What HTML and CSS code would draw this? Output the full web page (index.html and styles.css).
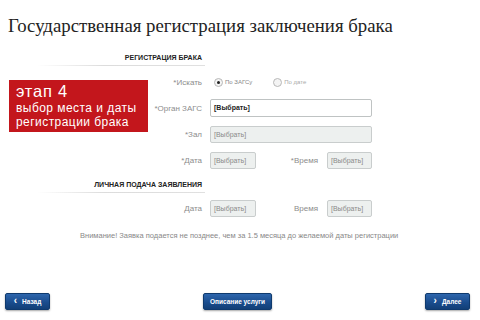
FILE: index.html
```html
<!DOCTYPE html>
<html lang="ru">
<head>
<meta charset="utf-8">
<link rel="stylesheet" href="styles.css">
</head>
<body>
<div class="page">
  <h1 class="title">Государственная регистрация заключения брака</h1>

  <div class="sec-head"><span>РЕГИСТРАЦИЯ БРАКА</span></div>

  <div class="form">
    <div class="stage">
      <div class="stage-num">этап 4</div>
      <div class="stage-text">выбор места и даты</div>
      <div class="stage-text">регистрации брака</div>
    </div>

    <div class="label">*Искать</div>
    <div class="field radios">
      <span class="radio checked"></span><span class="radio-label">По ЗАГСу</span>
      <span class="radio"></span><span class="radio-label light">По дате</span>
    </div>

    <div class="label">*Орган ЗАГС</div>
    <div class="field"><div class="input white">[Выбрать]</div></div>

    <div class="label">*Зал</div>
    <div class="field"><div class="input gray">[Выбрать]</div></div>

    <div class="label">*Дата</div>
    <div class="field pair">
      <div class="input gray small">[Выбрать]</div>
      <div class="label inner">*Время</div>
      <div class="input gray small">[Выбрать]</div>
    </div>
  </div>

  <div class="sec-head two"><span>ЛИЧНАЯ ПОДАЧА ЗАЯВЛЕНИЯ</span></div>

  <div class="form second">
    <div class="label">Дата</div>
    <div class="field pair">
      <div class="input gray small">[Выбрать]</div>
      <div class="label inner">Время</div>
      <div class="input gray small">[Выбрать]</div>
    </div>
  </div>

  <p class="notice">Внимание! Заявка подается не позднее, чем за 1.5 месяца до желаемой даты регистрации</p>

  <div class="footer">
    <button class="btn"><span class="chev">&#8249;</span>Назад</button>
    <button class="btn wide">Описание услуги</button>
    <button class="btn"><span class="chev">&#8250;</span>Далее</button>
  </div>
</div>
</body>
</html>
```
FILE: styles.css
```css
html, body {
  margin: 0;
  padding: 0;
  background: #fff;
}
.page {
  width: 480px;
  height: 320px;
  overflow: hidden;
  display: flex;
  flex-direction: column;
  font-family: "Liberation Sans", Arial, sans-serif;
  color: #777;
}
.title {
  margin: 14px 0 0 8px;
  font-family: "Liberation Serif", "Times New Roman", serif;
  font-weight: normal;
  font-size: 18.8px;
  line-height: 24px;
  color: #222;
}
.sec-head {
  margin: 12px 0 0 37px;
  width: 168px;
  height: 15px;
  line-height: 15px;
  text-align: right;
  font-size: 7px;
  font-weight: bold;
  color: #222;
  position: relative;
}
.sec-head span { padding-right: 3px; }
.sec-head::after {
  content: "";
  position: absolute;
  left: 0;
  right: 0;
  bottom: -1px;
  height: 1px;
  background: linear-gradient(to right, rgba(220,220,220,0), #dcdcdc 40%, #e0e0e0);
}
.sec-head.two {
  margin-top: 5px;
  height: 14px;
  line-height: 14px;
}
.form {
  margin-top: 4px;
  display: grid;
  grid-template-columns: 148px 55px 169px;
  grid-auto-rows: 26px;
}
.form.second { margin-top: 3px; }
.stage {
  grid-column: 1;
  grid-row: 1 / 4;
  align-self: start;
  margin: 11px 0 0 9px;
  height: 52px;
  background: #c3161c;
  color: #fff;
  font-family: "Liberation Sans", Arial, sans-serif;
  padding: 2px 0 0 7px;
  box-sizing: border-box;
  display: flex;
  flex-direction: column;
}
.stage-num {
  font-size: 16.5px;
  line-height: 19px;
  height: 19px;
  margin-bottom: 1px;
  letter-spacing: 0.8px;
}
.stage-text {
  font-size: 12px;
  line-height: 13.8px;
  height: 13.8px;
  white-space: nowrap;
  letter-spacing: 0.45px;
}
.label {
  grid-column: 2;
  align-self: center;
  text-align: right;
  font-size: 8px;
  color: #8c8c8c;
  padding-right: 1px;
}
.field {
  grid-column: 3;
  display: flex;
  align-items: center;
  padding-left: 7px;
}
.radio {
  width: 7px;
  height: 7px;
  border: 1px solid #b8b8b8;
  border-radius: 50%;
  background: #f4f4f4;
  box-sizing: content-box;
  margin-left: 4px;
  position: relative;
}
.radio.checked::after {
  content: "";
  position: absolute;
  left: 2px;
  top: 2px;
  width: 3px;
  height: 3px;
  border-radius: 50%;
  background: #222;
}
.radio-label {
  font-size: 6px;
  color: #888;
  margin-left: 2px;
  margin-right: 17px;
}
.radio-label.light { color: #aaa; margin-right: 0; }
.input {
  box-sizing: border-box;
  height: 17px;
  flex: 1;
  border: 1px solid #c9cdcd;
  border-radius: 2px;
  font-size: 7px;
  line-height: 15px;
  padding-left: 3px;
}
.input.white {
  height: 18px;
  line-height: 16px;
  background: #fff;
  border-color: #bfc3c3;
  color: #222;
  font-weight: bold;
}
.input.gray {
  background: #edf0ef;
  color: #8a8a8a;
}
.input.small {
  flex: 0 0 46px;
}
.input.small:last-child { flex-basis: 45px; }
.label.inner {
  flex: 1;
  padding-right: 9px;
}
.notice {
  margin: 9px 0 0 0;
  padding-left: 80px;
  font-size: 7.5px;
  line-height: 12px;
  color: #888;
}
.footer {
  margin-top: auto;
  padding: 0 10px 10px 5px;
  display: flex;
  justify-content: space-between;
  align-items: center;
}
.btn {
  height: 17px;
  width: 45px;
  border: 1px solid #0f3a6e;
  border-radius: 2px;
  background: linear-gradient(#2e66ad, #1a4d8e 55%, #123f77);
  box-shadow: 0 1px 2px rgba(0,0,0,0.35);
  color: #fff;
  font-family: "Liberation Sans", Arial, sans-serif;
  font-weight: bold;
  font-size: 6.5px;
  padding: 0;
  display: flex;
  align-items: center;
  justify-content: center;
}
.btn.wide { width: 69px; }
.chev {
  font-size: 10px;
  margin-right: 5px;
  line-height: 10px;
  margin-top: -1px;
}
```
